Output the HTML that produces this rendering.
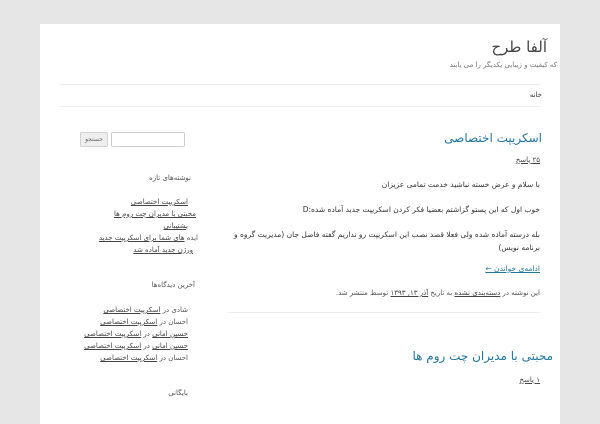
<!DOCTYPE html>
<html><head><meta charset="utf-8">
<style>
*{margin:0;padding:0;box-sizing:border-box}
body{width:600px;height:400px;background:#e6e6e6;overflow:hidden;position:relative;font-family:"DejaVu Sans","Liberation Sans",sans-serif;color:#444}
#pg{position:absolute;left:40px;top:24px;width:520px;height:400px;background:#fff}
.a{position:absolute;direction:rtl;white-space:nowrap;text-align:right}
.hr{position:absolute;height:1px;background:#ededed}
a,u{color:#444;text-decoration:underline}
.t{color:#21759b}
.s{font-size:7px;color:#555}
</style></head><body>
<div id="pg"></div>
<div class="a" style="right:53px;top:38px;font-size:15px;color:#444">آلفا طرح</div>
<div class="a" style="right:43px;top:61px;font-size:7px;color:#777;letter-spacing:0.7px">که کیفیت و زیبایی یکدیگر را می یابند</div>
<div class="hr" style="left:60px;width:480px;top:84px"></div>
<div class="a" style="right:58px;top:91px;font-size:7px;color:#333">خانه</div>
<div class="hr" style="left:60px;width:480px;top:106px"></div>

<div class="a t" style="right:58px;top:131px;font-size:12px">اسکریپت اختصاصی</div>
<div class="a s" style="right:60px;top:156px"><u>۲۵ پاسخ</u></div>
<div class="a" style="right:60px;top:180px;font-size:7.5px;color:#333">با سلام و عرض خسته نباشید خدمت تمامی عزیزان</div>
<div class="a" style="right:60px;top:205px;font-size:7.5px;color:#333">خوب اول که این پستو گزاشتم بعضیا فکر کردن اسکریپت جدید آماده شده:D</div>
<div class="a" style="left:222px;width:318px;top:228px;font-size:7.5px;color:#333;white-space:normal;line-height:13px;overflow:hidden;height:28px">بله درسته آماده شده ولی فعلا قصد نصب این اسکریپت رو نداریم گفته فاضل جان (مدیریت گروه و برنامه نویس)</div>
<div class="a" style="right:60px;top:264px;font-size:7.5px;color:#21759b"><u style="color:#21759b">ادامه‌ی خواندن ←</u></div>
<div class="a" style="right:60px;top:289px;font-size:7px;color:#555">این نوشته در <u>دسته‌بندی نشده</u> به تاریخ <u>آذر ۱۳, ۱۳۹۳</u> توسط منتشر شد.</div>
<div class="hr" style="left:228px;width:312px;top:312px"></div>

<div class="a t" style="right:47px;top:349px;font-size:12px">محبتی با مدیران چت روم ها</div>
<div class="a s" style="right:60px;top:376px"><u>۱ پاسخ</u></div>

<div style="position:absolute;left:80px;top:132px;width:28px;height:15px;background:#eee;border:1px solid #d2d2d2;border-radius:2px;font-size:6px;color:#666;text-align:center;line-height:13px">جستجو</div>
<div style="position:absolute;left:111px;top:132px;width:74px;height:15px;border:1px solid #ccc;border-radius:2px;background:#fff"></div>

<div class="a" style="right:409px;top:174px;font-size:7px;color:#555">نوشته‌های تازه</div>
<div class="a s" style="right:412px;top:198px"><u>اسکریپت اختصاصی</u></div>
<div class="a s" style="right:404px;top:210px"><u>محبتی با مدیران چت روم ها</u></div>
<div class="a s" style="right:412px;top:222px"><u>پشتیبانی</u></div>
<div class="a s" style="right:402px;top:234px">ایده <u>های شما برای اسکریپت جدید</u></div>
<div class="a s" style="right:407px;top:246px"><u>ورژن جدید آماده شد</u></div>

<div class="a" style="right:405px;top:281px;font-size:7px;color:#555">آخرین دیدگاه‌ها</div>
<div class="a s" style="right:412px;top:306px">شادی در <u>اسکریپت اختصاصی</u></div>
<div class="a s" style="right:412px;top:318px">احسان در <u>اسکریپت اختصاصی</u></div>
<div class="a s" style="right:412px;top:330px"><u>حسین امانی</u> در <u>اسکریپت اختصاصی</u></div>
<div class="a s" style="right:412px;top:342px"><u>حسین امانی</u> در <u>اسکریپت اختصاصی</u></div>
<div class="a s" style="right:412px;top:354px">احسان در <u>اسکریپت اختصاصی</u></div>

<div class="a" style="right:412px;top:389px;font-size:7px;color:#555">بایگانی</div>
</body></html>
